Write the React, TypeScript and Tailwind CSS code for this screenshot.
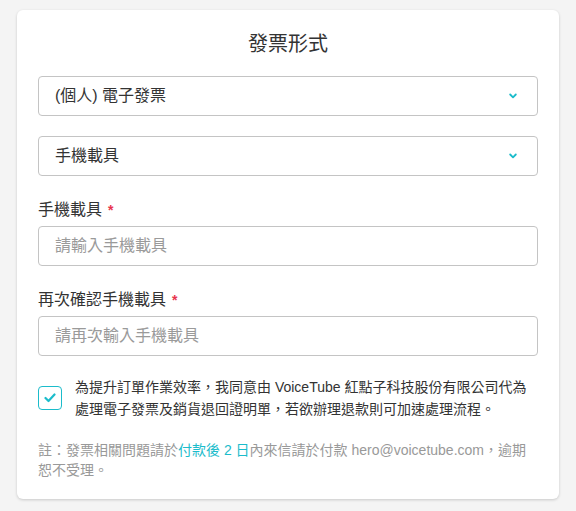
import { useState } from 'react';

const FONT = { fontFamily: '"Liberation Sans", "Noto Sans CJK TC", sans-serif' };

function Chevron() {
  return (
    <svg width="8" height="6" viewBox="0 0 8 6" className="pointer-events-none absolute right-[21px] top-1/2 -translate-y-1/2">
      <path d="M1.2 1.5 L4 4.3 L6.8 1.5" fill="none" stroke="#1bbccb" strokeWidth="1.8" strokeLinecap="round" strokeLinejoin="round" />
    </svg>
  );
}

function SelectBox({ value, options }: { value: string; options: string[] }) {
  const [v, setV] = useState(value);
  return (
    <div className="relative">
      <select
        value={v}
        onChange={(e) => setV(e.target.value)}
        className="h-10 w-full appearance-none rounded-[4px] border border-[#c4c4c4] bg-white pl-4 pr-10 text-base text-[#333] outline-none"
        style={FONT}
      >
        {options.map((o) => (
          <option key={o}>{o}</option>
        ))}
      </select>
      <Chevron />
    </div>
  );
}

function Field({ label, placeholder }: { label: string; placeholder: string }) {
  return (
    <div>
      <div className="mb-1 flex items-center gap-[6px] text-base leading-6 text-[#333]">
        <span>{label}</span>
        <span className="text-sm font-bold leading-none text-[#e8344e]">*</span>
      </div>
      <input
        placeholder={placeholder}
        className="h-10 w-full rounded-[4px] border border-[#c4c4c4] bg-white px-4 text-base text-[#333] outline-none placeholder:text-[#9a9a9a]"
        style={FONT}
      />
    </div>
  );
}

export default function App() {
  const [agree, setAgree] = useState(true);

  return (
    <div className="min-h-[511px] bg-[#f4f4f4] px-[17px] pt-[10px]" style={FONT}>
      <div className="rounded-[6px] bg-white px-[21px] pb-[19px] pt-5 shadow-[0_1px_3px_rgba(0,0,0,0.18)]">
        <h2 className="text-center text-xl leading-7 text-[#333]">發票形式</h2>

        <div className="mt-[18px] flex flex-col gap-5">
          <SelectBox value="(個人) 電子發票" options={['(個人) 電子發票', '(公司) 電子發票', '捐贈發票']} />
          <SelectBox value="手機載具" options={['手機載具', '自然人憑證', '會員載具']} />
        </div>

        <div className="mt-[22px] flex flex-col gap-[22px]">
          <Field label="手機載具" placeholder="請輸入手機載具" />
          <Field label="再次確認手機載具" placeholder="請再次輸入手機載具" />
        </div>

        <label className="mt-5 flex cursor-pointer items-center gap-[13px]">
          <button
            type="button"
            onClick={() => setAgree(!agree)}
            className="flex h-6 w-6 shrink-0 items-center justify-center rounded-[4px] border-[1.5px] border-[#1bbccb] bg-white"
          >
            {agree && (
              <svg width="12" height="10" viewBox="0 0 12 10">
                <path d="M1.5 5 L4.5 8 L10.5 1.5" fill="none" stroke="#1bbccb" strokeWidth="2.2" strokeLinecap="round" strokeLinejoin="round" />
              </svg>
            )}
          </button>
          <span className="text-sm leading-[22px] text-[#333]">
            為提升訂單作業效率，我同意由 VoiceTube 紅點子科技股份有限公司代為處理電子發票及銷貨退回證明單，若欲辦理退款則可加速處理流程。
          </span>
        </label>

        <p className="mt-5 text-sm leading-5 text-[#999]">
          <span>註：發票相關問題請於</span>
          <span className="text-[#1bbccb]">付款後 2 日</span>
          <span>內來信請於付款 hero@voicetube.com，逾期恕不受理。</span>
        </p>
      </div>
    </div>
  );
}
